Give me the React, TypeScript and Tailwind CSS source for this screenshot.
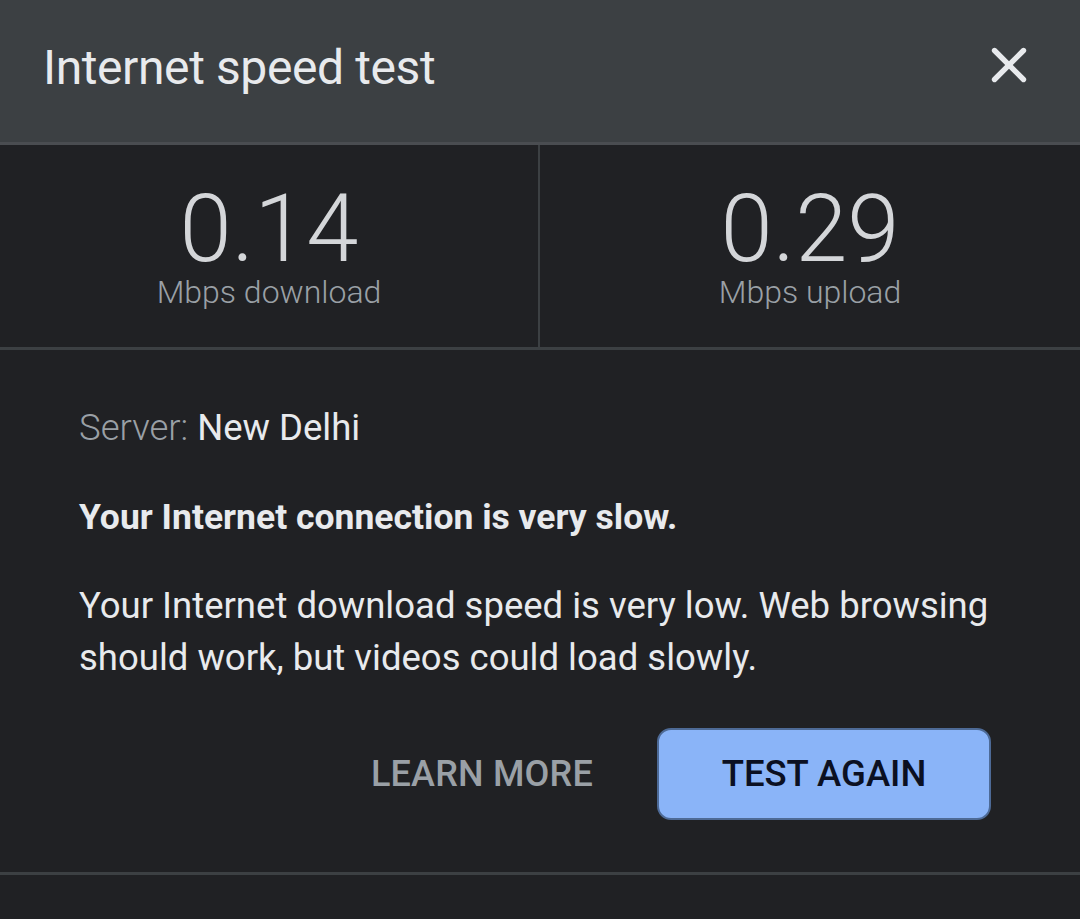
import { X } from "lucide-react";

export default function App() {
  return (
    <div
      className="w-[1080px] h-[919px] bg-[#202124] flex flex-col overflow-hidden"
      style={{ fontFamily: "Roboto, 'Noto Sans', sans-serif" }}
    >
      {/* Header */}
      <div className="h-[145px] shrink-0 bg-[#3c4043] flex items-center justify-between pl-[43px] pr-[42px] border-b-[3px] border-[#4a4d51]">
        <h1 className="text-[48px] text-[#e8eaed] font-normal tracking-[-0.4px] mt-[-6px]">
          Internet speed test
        </h1>
        <X size={58} strokeWidth={2.2} className="text-[#e8eaed] mt-[-12px]" />
      </div>

      {/* Stats */}
      <div className="h-[205px] shrink-0 grid grid-cols-2 border-b-[3px] border-[#3c4043]">
        <div className="flex flex-col items-center pt-[49px] border-r-2 border-[#3c4043]">
          <span className="text-[94px] leading-[70px] font-light text-[#d4d6d9]">0.14</span>
          <span className="text-[32px] leading-[36px] font-light text-[#9aa0a6] mt-[10px]">
            Mbps download
          </span>
        </div>
        <div className="flex flex-col items-center pt-[49px]">
          <span className="text-[94px] leading-[70px] font-light text-[#d4d6d9]">0.29</span>
          <span className="text-[32px] leading-[36px] font-light text-[#9aa0a6] mt-[10px]">
            Mbps upload
          </span>
        </div>
      </div>

      {/* Body */}
      <div className="flex flex-col pl-[79px] pr-[89px] pt-[56px]">
        <p className="text-[36.5px] leading-[44px]">
          <span className="font-light text-[#9aa0a6]">Server: </span>
          <span className="text-[#e8eaed]">New Delhi</span>
        </p>
        <p className="mt-[45px] text-[35.5px] leading-[44px] font-bold text-[#e8eaed]">
          Your Internet connection is very slow.
        </p>
        <p className="mt-[41px] text-[36.5px] leading-[52px] text-[#e8eaed]">
          Your Internet download speed is very low. Web browsing should work, but videos could load
          slowly.
        </p>
        <div className="flex justify-end items-center mt-[44px] gap-[64px]">
          <button className="text-[36px] font-medium text-[#9aa0a6] tracking-[0.2px]">
            LEARN MORE
          </button>
          <button className="w-[334px] h-[92px] rounded-[14px] bg-[#8ab4f8] border-2 border-[#4d6a96] text-[36.5px] font-medium text-[#0b1022]">
            TEST AGAIN
          </button>
        </div>
      </div>

      <div className="mt-[52px] border-t-[3px] border-[#3c4043]" />
    </div>
  );
}
